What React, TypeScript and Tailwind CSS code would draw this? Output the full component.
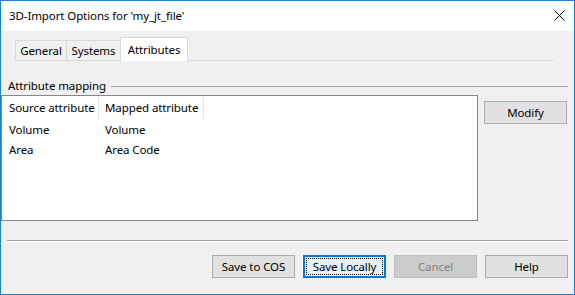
const font = "font-['Segoe_UI','Noto_Sans','Liberation_Sans',sans-serif]";

function Tab({ label, width, active }: { label: string; width: string; active?: boolean }) {
  if (active) {
    return (
      <div className={`${width} h-[24px] flex items-center justify-center bg-white border border-b-0 border-[#d9d9d9] -ml-px`}>
        {label}
      </div>
    );
  }
  return (
    <div className={`${width} h-[21px] flex items-center justify-center bg-[#f0f0f0] border border-[#d9d9d9] -ml-px first:ml-0`}>
      {label}
    </div>
  );
}

function Button({ label, variant }: { label: string; variant?: "focus" | "disabled" }) {
  if (variant === "focus") {
    return (
      <div className="w-[83px] h-[23px] border-2 border-[#0078d7] bg-[#e5f1fb] p-px">
        <div className="w-full h-full border border-dotted border-black flex items-center justify-center">
          {label}
        </div>
      </div>
    );
  }
  if (variant === "disabled") {
    return (
      <div className="w-[83px] h-[23px] border border-[#bfbfbf] bg-[#cccccc] text-[#838383] flex items-center justify-center">
        {label}
      </div>
    );
  }
  return (
    <div className="w-[83px] h-[23px] border border-[#adadad] bg-[#e1e1e1] flex items-center justify-center">
      {label}
    </div>
  );
}

const rows = [
  { source: "Volume", mapped: "Volume" },
  { source: "Area", mapped: "Area Code" },
];

export default function App() {
  return (
    <div className={`${font} w-[575px] h-[295px] border border-[#1883d7] bg-[#f0f0f0] text-[11.5px] tracking-[-0.1px] leading-[14px] text-black whitespace-nowrap flex flex-col overflow-hidden`}>
      <div className="h-[30px] bg-white flex items-center justify-between pl-[8px] pr-[9px] shrink-0">
        <span>3D-Import Options for 'my_jt_file'</span>
        <svg width="11" height="11" viewBox="0 0 11 11" className="mb-[1px]">
          <path d="M0.5 0.5 L10.5 10.5 M10.5 0.5 L0.5 10.5" stroke="#000" strokeWidth="1" />
        </svg>
      </div>

      <div className="flex items-end h-[24px] mt-[6px] pl-[14px] pr-[20px] shrink-0">
        <Tab label="General" width="w-[52px]" />
        <Tab label="Systems" width="w-[55px]" />
        <Tab label="Attributes" width="w-[68px]" active />
        <div className="flex-1 border-b border-[#d9d9d9]" />
      </div>

      <div className="flex items-center mt-[18px] pl-[7px] pr-[6px] h-[14px] shrink-0">
        <span>Attribute mapping</span>
        <div className="flex-1 h-px bg-[#a0a0a0] ml-[5px]" />
      </div>

      <div className="flex items-start mt-[2px] shrink-0">
        <div className="w-[477px] h-[126px] bg-white border border-[#828790]">
          <div className="flex h-[24px] items-center">
            <div className="w-[97px] h-full pl-[7px] flex items-center border-r border-[#e5e5e5]">Source attribute</div>
            <div className="w-[105px] h-full pl-[6px] flex items-center border-r border-[#e5e5e5]">Mapped attribute</div>
          </div>
          {rows.map((r) => (
            <div key={r.source} className="flex h-[20px] items-center">
              <div className="w-[103px] pl-[7px]">{r.source}</div>
              <div>{r.mapped}</div>
            </div>
          ))}
        </div>
        <div className="ml-[6px] mt-[6px]">
          <Button label="Modify" />
        </div>
      </div>

      <div className="mt-[19px] ml-[6px] mr-[6px] border-t border-[#a0a0a0] border-b border-b-white shrink-0" />

      <div className="flex justify-end gap-[8px] mt-[13px] pr-[6px] shrink-0">
        <Button label="Save to COS" />
        <Button label="Save Locally" variant="focus" />
        <Button label="Cancel" variant="disabled" />
        <Button label="Help" />
      </div>
    </div>
  );
}
